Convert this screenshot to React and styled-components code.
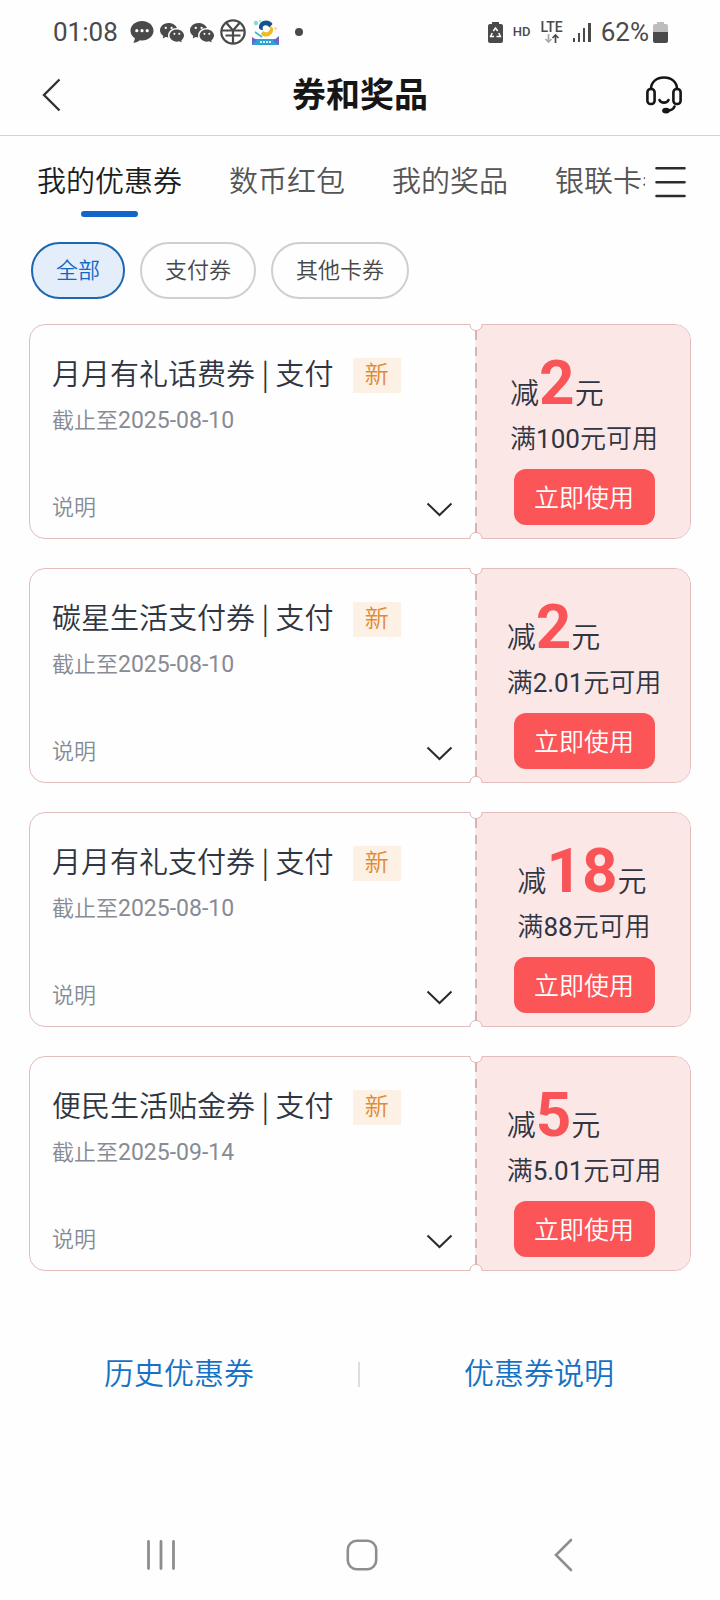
import React from "react";
import styled, { createGlobalStyle, css } from "styled-components";
import { BsWechat } from "react-icons/bs";

const GlobalStyle = createGlobalStyle`
  *, *::before, *::after { box-sizing: border-box; }
  body {
    margin: 0;
    background: #fefefe;
    color: #2f3542;
    font-family: Roboto, "Noto Sans CJK SC", sans-serif;
    font-weight: 350;
  }
  button {
    font: inherit;
    color: inherit;
    background: none;
    border: 0;
    padding: 0;
    margin: 0;
    cursor: pointer;
  }
  h1, h2, p { margin: 0; font-weight: inherit; }
  svg { display: block; flex: none; }
`;

const Screen = styled.div`
  min-height: 100vh;
  display: flex;
  flex-direction: column;
`;

/* Status bar */
const StatusBar = styled.div`
  display: flex;
  justify-content: space-between;
  align-items: center;
  height: 64px;
  padding: 0 52px 0 53px;
  color: #4a4a4a;
`;

const StatusGroup = styled.div`
  display: flex;
  align-items: center;
  gap: ${(p) => p.$gap}px;
`;

const StatusText = styled.span`
  font-size: 26px;
  line-height: 30px;
  font-weight: 400;
`;

const HdLabel = styled.span`
  font-size: 13px;
  line-height: 16px;
  font-weight: 500;
`;

const LteLabel = styled.span`
  display: flex;
  flex-direction: column;
  align-items: center;
  font-size: 14px;
  line-height: 13px;
  font-weight: 500;
`;

/* Header */
const Header = styled.header`
  display: grid;
  grid-template-columns: 32px 1fr 37px;
  align-items: center;
  height: 72px;
  padding: 0 37px 10px 42px;
  border-bottom: 1px solid #d4d4d4;
`;

const Title = styled.h1`
  font-size: 34px;
  line-height: 44px;
  font-weight: 700;
  text-align: center;
  color: #161616;
`;

const IconButton = styled.button`
  display: flex;
  justify-content: ${(p) => p.$justify || "center"};
  align-items: center;
`;

/* Tabs */
const TabBar = styled.nav`
  display: flex;
  align-items: flex-start;
  height: 84px;
  padding: 24px 34px 0 37px;
  gap: 10px;
`;

const TabList = styled.div`
  flex: 1;
  min-width: 0;
  display: flex;
  gap: 47px;
  overflow: hidden;
`;

const Tab = styled.button`
  flex: none;
  display: flex;
  flex-direction: column;
  align-items: center;
  gap: 7px;
  font-size: 29px;
  line-height: 44px;
  color: ${(p) => (p.$active ? "#1c1c1c" : "#555")};
  ${(p) =>
    p.$active &&
    css`
      &::after {
        content: "";
        width: 57px;
        height: 6px;
        border-radius: 3px;
        background: #1265cc;
      }
    `}
`;

const MenuButton = styled(IconButton)`
  height: 44px;
`;

/* Filter chips */
const Chips = styled.div`
  display: flex;
  gap: 15px;
  padding: 22px 31px 25px;
`;

const Chip = styled.button`
  height: 57px;
  padding: 0 23px;
  border: 2px solid ${(p) => (p.$active ? "#1f66b0" : "#cfcfcf")};
  border-radius: 29px;
  background: ${(p) => (p.$active ? "#e4eefb" : "transparent")};
  color: ${(p) => (p.$active ? "#1268c3" : "#484848")};
  font-size: 22px;
  line-height: 32px;
`;

/* Coupons */
const CouponList = styled.main`
  display: flex;
  flex-direction: column;
  gap: 29px;
  padding: 0 29px;
`;

const Card = styled.article`
  position: relative;
  display: grid;
  grid-template-columns: 1fr 214px;
  min-height: 215px;
  border: 1px solid #e2bdbb;
  border-radius: 16px;
`;

const Info = styled.div`
  display: flex;
  flex-direction: column;
  padding: 29px 23px 15px 22px;
`;

const NameRow = styled.div`
  display: flex;
  align-items: flex-start;
  gap: 19px;
`;

const Name = styled.h2`
  font-family: "Noto Sans CJK SC", sans-serif;
  font-size: 29px;
  line-height: 36px;
  white-space: pre;
`;

const Badge = styled.span`
  margin-top: 4px;
  padding: 0 12px;
  background: #fdf1e6;
  color: #e08a35;
  font-size: 24px;
  line-height: 35px;
`;

const Expiry = styled.p`
  margin-top: 13px;
  font-size: 22px;
  line-height: 30px;
  color: #868b94;
`;

const ExpiryDate = styled.time`
  font-size: 23px;
  font-weight: 400;
`;

const Details = styled.button`
  display: flex;
  justify-content: space-between;
  align-items: center;
  margin-top: auto;
  font-size: 22px;
  line-height: 30px;
  color: #868b94;
`;

const Offer = styled.div`
  position: relative;
  display: flex;
  flex-direction: column;
  align-items: center;
  padding: 26px 0 13px 2px;
  background: #fbe7e6;
  border-radius: 0 15px 15px 0;

  &::before {
    content: "";
    position: absolute;
    left: -1px;
    top: 6px;
    bottom: 6px;
    width: 2px;
    background: repeating-linear-gradient(#d6b3b5 0 9px, #fbecec 9px 16px);
  }
`;

const OfferText = styled.div`
  display: flex;
  flex-direction: column;
  gap: 6px;
`;

const Amount = styled.p`
  display: flex;
  align-items: baseline;
  height: 64px;
  font-size: 29px;
  line-height: 64px;
`;

const AmountNumber = styled.strong`
  font-size: 62px;
  font-weight: 700;
  color: #f95457;
`;

const Condition = styled.p`
  font-size: 26px;
  line-height: 36px;
`;

const Threshold = styled.span`
  font-weight: 400;
`;

const UseButton = styled.button`
  width: 141px;
  height: 56px;
  margin-top: auto;
  padding-top: 4px;
  border-radius: 12px;
  background: #fc5557;
  color: #fff;
  font-size: 25px;
  line-height: 36px;
`;

const NotchSvg = styled.svg`
  position: absolute;
  right: 207px;
  ${(p) =>
    p.$bottom
      ? css`
          bottom: -2px;
          transform: scaleY(-1);
        `
      : css`
          top: -2px;
        `}
`;

/* Bottom links */
const Links = styled.div`
  display: grid;
  grid-template-columns: 1fr 2px 1fr;
  align-items: center;
  justify-items: center;
  margin-top: 81px;
  padding-right: 2px;
`;

const Link = styled.a`
  font-size: 30px;
  line-height: 44px;
  color: #1672c4;
  text-decoration: none;
`;

const Separator = styled.span`
  width: 2px;
  height: 25px;
  background: #dedede;
`;

/* System navigation */
const SystemNav = styled.nav`
  display: grid;
  grid-template-columns: repeat(3, 1fr);
  height: 90px;
  margin-top: auto;
  padding: 0 56px 0 60px;
`;

const ChatIcon = () => (
  <svg width="24" height="24" viewBox="0 0 24 24">
    <path
      d="M12 1C5.6 1 .5 5.3.5 10.7c0 3.100 1.700 5.700 4.400 7.500-.2 1.800-.9 3.200-1.600 4.600 2.700-.3 5-1.200 6.500-2.600.7.1 1.400.2 2.200.2 6.400 0 11.500-4.300 11.500-9.700S18.400 1 12 1z"
      fill="currentColor"
    />
    <circle cx="6.800" cy="10.700" r="1.600" fill="#fff" />
    <circle cx="12" cy="10.700" r="1.600" fill="#fff" />
    <circle cx="17.200" cy="10.700" r="1.600" fill="#fff" />
  </svg>
);

const CoinIcon = () => (
  <svg width="26" height="26" viewBox="0 0 26 26" fill="none" stroke="currentColor" strokeWidth="2.200">
    <circle cx="13" cy="13" r="11.700" />
    <path d="M13 11V25M1 11.500H8M18 11.500H25M6.500 4L13 11.500L19.500 4" />
    <path d="M7.500 11.500H18.500M5.500 16.500H20.500" />
  </svg>
);

const AppIcon = () => (
  <svg width="27" height="26" viewBox="0 0 27 26">
    <rect x="0" y="20" width="27" height="6" fill="#2aa3d6" />
    <path d="M0 18L5 21L0 26zM27 17L21 22L27 26z" fill="#6d63c9" />
    <path d="M8 23H19" stroke="#d9f3fb" strokeWidth="2" strokeDasharray="2 1" />
    <path d="M7 9C6.500 4.500 10 1.500 14 1.500C17 1.500 19.500 3 20.500 5L17.500 8.500C16 6 13 5.500 11.500 7C10.500 8 10.500 9.500 11 11C9 11 7.500 10.500 7 9z" fill="#16518f" />
    <path d="M18 7.500C21 7.500 21.500 10 21 12C20 16 16 18 12.500 17.500C10.500 17 9.500 16 9 14.500L11.500 12C13 14 15.500 13.500 17 12C18 11 18.500 9 18 7.500z" fill="#f0b926" />
    <circle cx="4" cy="4" r="2.200" fill="#7fdcd9" />
    <circle cx="8" cy="2" r="1.200" fill="#a5e8e2" />
    <circle cx="23.500" cy="9.500" r="1.200" fill="#f6cf6a" />
    <path d="M3 13L10 18" stroke="#3bb8d4" strokeWidth="1.600" />
  </svg>
);

const DotIcon = () => (
  <svg width="8" height="8" viewBox="0 0 8 8">
    <circle cx="4" cy="4" r="4" fill="currentColor" />
  </svg>
);

const SaverBatteryIcon = () => (
  <svg width="15" height="21" viewBox="0 0 15 21">
    <path d="M4 0H11V2H13Q15 2 15 4V19Q15 21 13 21H2Q0 21 0 19V4Q0 2 2 2H4z" fill="currentColor" />
    <g fill="none" stroke="#fff" strokeWidth="1.500">
      <path d="M5.300 9L7.500 6L9.700 9" />
      <path d="M4.200 11L2.600 14.500H6" />
      <path d="M10.800 11L12.400 14.500H8.500" />
    </g>
  </svg>
);

const DataArrows = () => (
  <svg width="16" height="9" viewBox="0 0 16 9" fill="none" strokeWidth="1.700">
    <path d="M4.500 0V8M1.500 5L4.500 8L7.500 5" stroke="#a8a8a8" />
    <path d="M11.500 9V1M8.500 4L11.500 1L14.500 4" stroke="currentColor" />
  </svg>
);

const SignalIcon = () => (
  <svg width="18" height="20" viewBox="0 0 18 20" fill="currentColor">
    <rect x="0" y="16" width="2" height="4" />
    <rect x="5" y="11" width="2" height="9" />
    <rect x="10" y="6" width="2" height="14" />
    <rect x="15" y="1" width="3" height="19" />
  </svg>
);

const BatteryIcon = () => (
  <svg width="15" height="21" viewBox="0 0 15 21">
    <path d="M4 0H11V2H13Q15 2 15 4V10H0V4Q0 2 2 2H4z" fill="#bdbdbd" />
    <path d="M0 10H15V19Q15 21 13 21H2Q0 21 0 19z" fill="currentColor" />
  </svg>
);

const BackIcon = () => (
  <svg width="19" height="34" viewBox="0 0 19 34" fill="none" stroke="#333" strokeWidth="2.400">
    <path d="M17.500 1.500L2 17L17.500 32.500" />
  </svg>
);

const HeadsetIcon = () => (
  <svg width="36" height="38" viewBox="0 0 36 38" fill="none" stroke="#161616" strokeWidth="2.600" strokeLinecap="round">
    <rect x="1.400" y="13" width="7.200" height="15" rx="3.200" />
    <rect x="27.400" y="13" width="7.200" height="15" rx="3.200" />
    <path d="M5 13C5 6 10.500 1.500 18 1.500S31 6 31 13" />
    <path d="M13.500 24C15 27.500 21 27.500 22.500 24" />
    <path d="M28.500 30.500C27.500 33 25 34.500 21.500 34.500" />
    <ellipse cx="20" cy="34.600" rx="2.600" ry="1.600" fill="#161616" />
  </svg>
);

const MenuIcon = () => (
  <svg width="31" height="32" viewBox="0 0 31 32" stroke="#2c2c2c" strokeWidth="2.600" strokeLinecap="round">
    <path d="M1.500 2.200H29.500M1.500 16.200H29.500M1.500 30H29.500" />
  </svg>
);

const ChevronIcon = () => (
  <svg width="27" height="20" viewBox="0 0 27 20" fill="none" stroke="#2a2a2a" strokeWidth="2">
    <path d="M1.500 5.500L13.500 17L25.500 5.500" />
  </svg>
);

const Notch = ({ bottom }) => (
  <NotchSvg $bottom={bottom} width="14" height="10" viewBox="0 0 14 10" aria-hidden="true">
    <path d="M0 0H14V1.500H13C13 5 10.500 7.500 7 7.500S1 5 1 1.500H0z" fill="#fefefe" />
    <path d="M0 1.500H1C1 5 3.500 7.500 7 7.500S13 5 13 1.500H14" fill="none" stroke="#dcb3b2" />
  </NotchSvg>
);

const RecentsIcon = () => (
  <svg width="30" height="32" viewBox="0 0 30 32" stroke="#8e8e8e" strokeWidth="2.800" strokeLinecap="round">
    <path d="M2.500 2.500V29.500M15 2.500V29.500M27.500 2.500V29.500" />
  </svg>
);

const HomeIcon = () => (
  <svg width="32" height="32" viewBox="0 0 32 32" fill="none" stroke="#8e8e8e" strokeWidth="2.600">
    <rect x="1.800" y="1.800" width="28.400" height="28.400" rx="9" />
  </svg>
);

const NavBackIcon = () => (
  <svg width="19" height="34" viewBox="0 0 19 34" fill="none" stroke="#8e8e8e" strokeWidth="2.600" strokeLinecap="round">
    <path d="M17 2L2 17L17 32" />
  </svg>
);

const tabs = ["我的优惠券", "数币红包", "我的奖品", "银联卡券"];
const chips = ["全部", "支付券", "其他卡券"];
const coupons = [
  { name: "月月有礼话费券 | 支付", expiry: "2025-08-10", amount: "2", threshold: "100" },
  { name: "碳星生活支付券 | 支付", expiry: "2025-08-10", amount: "2", threshold: "2.01" },
  { name: "月月有礼支付券 | 支付", expiry: "2025-08-10", amount: "18", threshold: "88" },
  { name: "便民生活贴金券 | 支付", expiry: "2025-09-14", amount: "5", threshold: "5.01" },
];

const Coupon = ({ name, expiry, amount, threshold }) => (
  <Card>
    <Info>
      <NameRow>
        <Name>{name}</Name>
        <Badge>新</Badge>
      </NameRow>
      <Expiry>
        截止至<ExpiryDate>{expiry}</ExpiryDate>
      </Expiry>
      <Details type="button">
        说明
        <ChevronIcon />
      </Details>
    </Info>
    <Offer>
      <OfferText>
        <Amount>
          减<AmountNumber>{amount}</AmountNumber>元
        </Amount>
        <Condition>
          满<Threshold>{threshold}</Threshold>元可用
        </Condition>
      </OfferText>
      <UseButton type="button">立即使用</UseButton>
    </Offer>
    <Notch />
    <Notch bottom />
  </Card>
);

export default function App() {
  return (
    <Screen>
      <GlobalStyle />
      <StatusBar>
        <StatusGroup $gap={16}>
          <StatusGroup $gap={12}>
            <StatusText>01:08</StatusText>
            <StatusGroup $gap={6}>
              <ChatIcon />
              <BsWechat size={24} />
              <BsWechat size={24} />
              <CoinIcon />
              <AppIcon />
            </StatusGroup>
          </StatusGroup>
          <DotIcon />
        </StatusGroup>
        <StatusGroup $gap={10}>
          <SaverBatteryIcon />
          <HdLabel>HD</HdLabel>
          <LteLabel>
            LTE
            <DataArrows />
          </LteLabel>
          <SignalIcon />
          <StatusGroup $gap={4}>
            <StatusText>62%</StatusText>
            <BatteryIcon />
          </StatusGroup>
        </StatusGroup>
      </StatusBar>

      <Header>
        <IconButton type="button" aria-label="返回" $justify="flex-start">
          <BackIcon />
        </IconButton>
        <Title>券和奖品</Title>
        <IconButton type="button" aria-label="客服" $justify="flex-start">
          <HeadsetIcon />
        </IconButton>
      </Header>

      <TabBar>
        <TabList>
          {tabs.map((label, i) => (
            <Tab key={label} type="button" $active={i === 0}>
              {label}
            </Tab>
          ))}
        </TabList>
        <MenuButton type="button" aria-label="更多">
          <MenuIcon />
        </MenuButton>
      </TabBar>

      <Chips>
        {chips.map((label, i) => (
          <Chip key={label} type="button" $active={i === 0}>
            {label}
          </Chip>
        ))}
      </Chips>

      <CouponList>
        {coupons.map((c) => (
          <Coupon key={c.name} {...c} />
        ))}
      </CouponList>

      <Links>
        <Link href="#history">历史优惠券</Link>
        <Separator />
        <Link href="#help">优惠券说明</Link>
      </Links>

      <SystemNav>
        <IconButton type="button" aria-label="最近任务">
          <RecentsIcon />
        </IconButton>
        <IconButton type="button" aria-label="主屏幕">
          <HomeIcon />
        </IconButton>
        <IconButton type="button" aria-label="系统返回">
          <NavBackIcon />
        </IconButton>
      </SystemNav>
    </Screen>
  );
}
